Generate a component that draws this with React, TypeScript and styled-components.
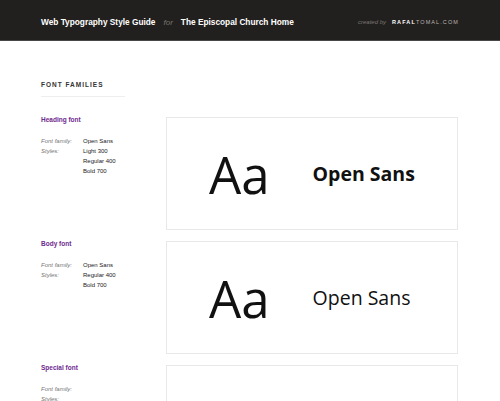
import React from "react";
import styled, { createGlobalStyle } from "styled-components";

const GlobalStyle = createGlobalStyle`
    html, body {
        margin: 0;
        padding: 0;
        background: #fff;
        font-family: "Liberation Sans", Arial, sans-serif;
        overflow: hidden;
    }
`;

type Family = {
    label: string;
    name: string;
    styles: string[];
    weight?: number;
    sample?: boolean;
};

const families: Family[] = [
    { label: "Heading font", name: "Open Sans", styles: ["Light 300", "Regular 400", "Bold 700"], weight: 700, sample: true },
    { label: "Body font", name: "Open Sans", styles: ["Regular 400", "Bold 700"], weight: 400, sample: true },
    { label: "Special font", name: "", styles: [], sample: false },
];

export default function App() {
    return (
        <Page>
            <GlobalStyle />
            <Header>
                <Brand>
                    <Strong>Web Typography Style Guide</Strong>
                    <For>for</For>
                    <Strong>The Episcopal Church Home</Strong>
                </Brand>
                <Credit>
                    <CreatedBy>created by</CreatedBy>
                    <Site>
                        <b>RAFAL</b>TOMAL.COM
                    </Site>
                </Credit>
            </Header>
            <Main>
                <SectionTitle>Font families</SectionTitle>
                {families.map((f) => (
                    <Section key={f.label}>
                        <Info>
                            <FontLabel>{f.label}</FontLabel>
                            <Specs>
                                <Key>Font family:</Key>
                                <Value>{f.name}</Value>
                                <Key>Styles:</Key>
                                <Value>
                                    {f.styles.map((s) => (
                                        <div key={s}>{s}</div>
                                    ))}
                                </Value>
                            </Specs>
                        </Info>
                        <Card>
                            {f.sample && (
                                <>
                                    <Big>Aa</Big>
                                    <Name $weight={f.weight ?? 400}>{f.name}</Name>
                                </>
                            )}
                        </Card>
                    </Section>
                ))}
            </Main>
        </Page>
    );
}

const Page = styled.div`
    height: 401px;
    overflow: hidden;
`;

const Header = styled.header`
    height: 40px;
    background: #22201e;
    border-bottom: 1px solid #4a4846;
    display: flex;
    align-items: center;
    justify-content: space-between;
    padding: 0 41px;
    box-sizing: content-box;
`;

const Brand = styled.div`
    display: flex;
    align-items: baseline;
    gap: 8px;
    font-size: 8.3px;
    margin-top: 3px;
`;

const Strong = styled.span`
    color: #fff;
    font-weight: bold;
`;

const For = styled.span`
    color: #77736f;
    font-style: italic;
    font-size: 8px;
`;

const Credit = styled.div`
    display: flex;
    align-items: baseline;
    gap: 6px;
    margin-top: 3px;
`;

const CreatedBy = styled.span`
    color: #7a7672;
    font-style: italic;
    font-size: 6px;
`;

const Site = styled.span`
    color: #b8b5b2;
    font-size: 5.5px;
    letter-spacing: 1.1px;
    b {
        color: #fff;
    }
`;

const Main = styled.main`
    padding: 39px 42px 0 41px;
`;

const SectionTitle = styled.h2`
    margin: 0 0 18px;
    width: 84px;
    padding-bottom: 6px;
    border-bottom: 1px solid #eeeeee;
    font-size: 6.5px;
    font-weight: bold;
    letter-spacing: 1px;
    text-transform: uppercase;
    color: #333;
    line-height: 10px;
`;

const Section = styled.section`
    display: grid;
    grid-template-columns: 125px 1fr;
    margin-bottom: 9px;
`;

const Info = styled.div``;

const FontLabel = styled.h3`
    margin: 0 0 11px;
    font-size: 6.5px;
    font-weight: bold;
    color: #6e2a8e;
    line-height: 10px;
`;

const Specs = styled.div`
    display: grid;
    grid-template-columns: 42px 1fr;
    font-size: 6px;
    line-height: 10px;
`;

const Key = styled.div`
    color: #777;
    font-style: italic;
`;

const Value = styled.div`
    color: #222;
`;

const Card = styled.div`
    height: 111px;
    margin-top: 2px;
    border: 1px solid #e8e8e8;
    display: flex;
    align-items: center;
    padding-left: 42px;
    gap: 43px;
    font-family: "Open Sans", sans-serif;
    color: #111;
`;

const Big = styled.div`
    font-size: 51px;
    font-weight: 400;
    line-height: 1;
    margin-top: 2px;
`;

const Name = styled.div<{ $weight: number }>`
    font-size: 19.5px;
    font-weight: ${(p) => p.$weight};
    line-height: 1;
`;
